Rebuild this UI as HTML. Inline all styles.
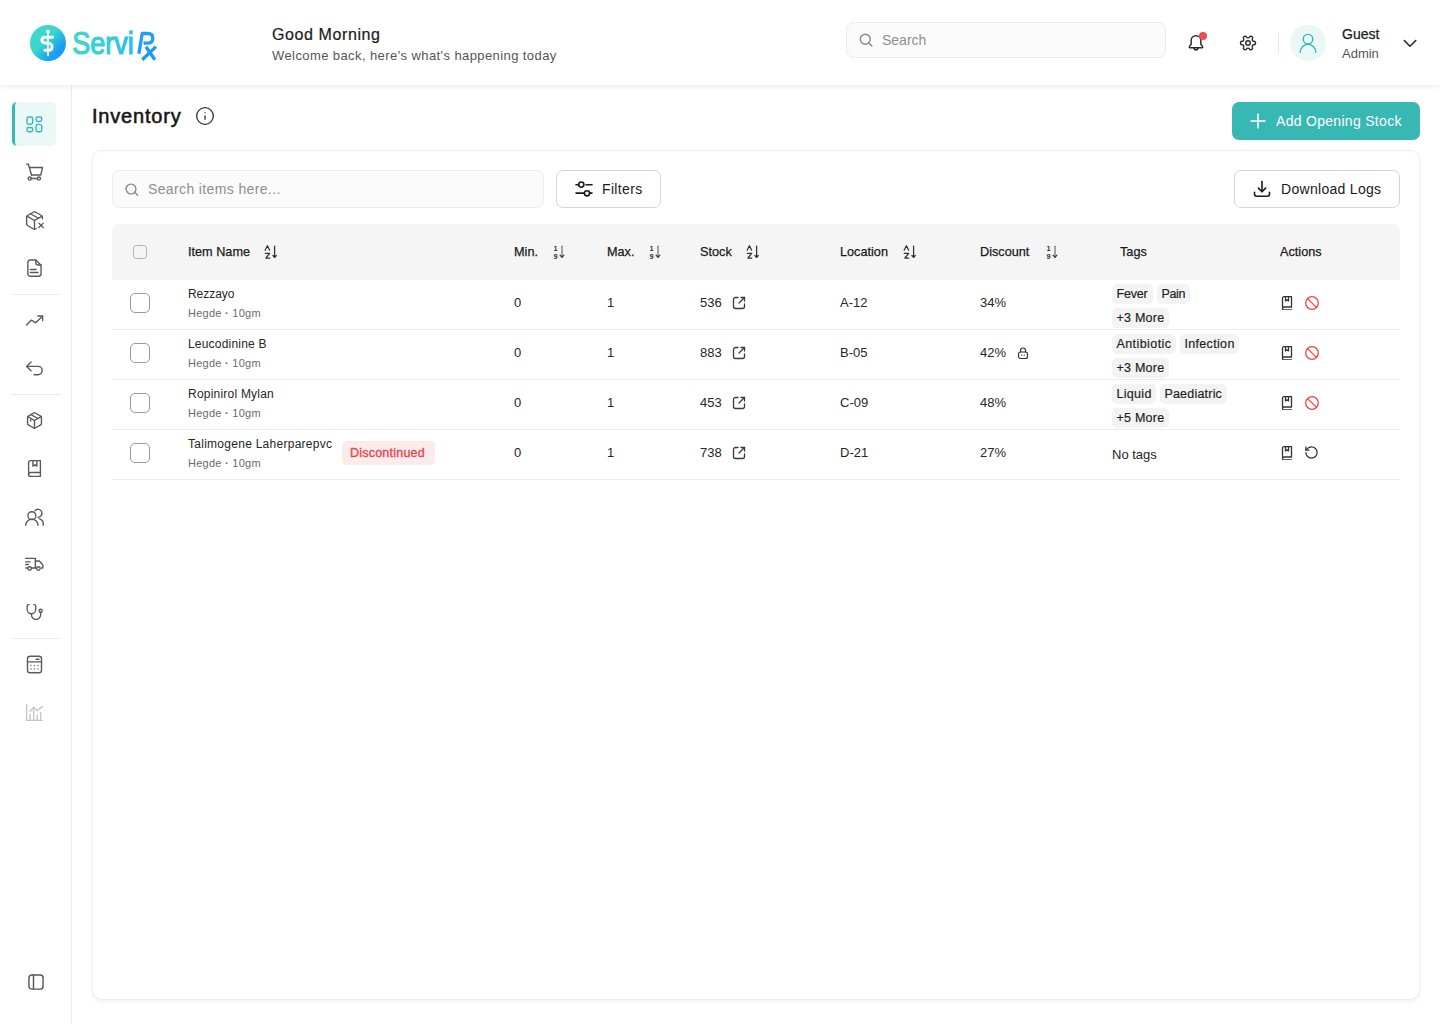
<!DOCTYPE html>
<html><head><meta charset="utf-8">
<style>
*{box-sizing:border-box;margin:0;padding:0}
html,body{width:1440px;height:1024px;overflow:hidden;background:#fff;font-family:"Liberation Sans",sans-serif;color:#1a1a1a}
.abs{position:absolute}
#header{position:absolute;left:0;top:0;width:1440px;height:85px;background:#fff;box-shadow:0 2px 6px rgba(0,0,0,0.075);z-index:5}
#sidebar{position:absolute;left:0;top:85px;width:72px;height:939px;background:#fff;border-right:1px solid #ececec}
.nav{position:absolute;left:12px;width:44px;height:44px;border-radius:7px;display:flex;align-items:center;justify-content:center}
.nav svg{width:21px;height:21px;fill:none;stroke:#5a5a5a;stroke-width:1.6;stroke-linecap:round;stroke-linejoin:round}
.nav.active{background:#ebf8f8;border-left:3px solid #38b8b2;border-radius:5px}
.nav.active svg{margin-left:-3px}
.nav.active svg{stroke:#38b8b2}
.sdiv{position:absolute;left:12px;width:48px;height:1px;background:#ececec}
.txt{position:absolute;white-space:nowrap;line-height:1}
#card{position:absolute;left:92px;top:150px;width:1328px;height:850px;background:#fff;border:1px solid #ededed;border-radius:10px;box-shadow:0 2px 4px rgba(0,0,0,0.05)}
.th{position:absolute;top:224px;left:112px;width:1288px;height:56px;background:#f5f5f5;border-radius:7px 7px 0 0}
.row{position:absolute;left:112px;width:1288px;height:50px;border-bottom:1px solid #ebebeb}
.hl{font-size:12.7px;color:#1a1a1a;-webkit-text-stroke:0.25px #1a1a1a}
.cell{font-size:13px;color:#262626}
.sub{font-size:11px;letter-spacing:0.26px;color:#6b6b6b}
.cb{position:absolute;width:20px;height:20px;border:1.7px solid #999;border-radius:5px;background:#fff}
.tags{position:absolute;width:140px;display:flex;flex-wrap:wrap;gap:4px}
.tag{position:absolute;height:20px;padding:0 0 0 4.4px;background:#f3f3f3;border-radius:5px;font-size:12.5px;line-height:20px;color:#1f1f1f;-webkit-text-stroke:0.2px #1f1f1f;white-space:nowrap}
.tb{font-size:14px}
.nm{font-size:12px;color:#262626}
.badge{font-size:12.5px;letter-spacing:0.22px;color:#e5484d;-webkit-text-stroke:0.35px #e5484d}
svg.ic{position:absolute;fill:none;stroke-linecap:round;stroke-linejoin:round}
</style></head><body>

<div id="header">
  <!-- logo -->
  <svg class="abs" style="left:25px;top:20px" width="140" height="46" viewBox="0 0 140 46">
    <defs>
      <linearGradient id="lg1" x1="9" y1="9" x2="37" y2="37" gradientUnits="userSpaceOnUse"><stop offset="0" stop-color="#3fd8cc"/><stop offset="0.42" stop-color="#3cd4ce"/><stop offset="0.62" stop-color="#27b8e3"/><stop offset="0.8" stop-color="#1b9ff0"/><stop offset="1" stop-color="#1a9cf2"/></linearGradient>
      <linearGradient id="lg2" x1="48" y1="0" x2="110" y2="0" gradientUnits="userSpaceOnUse"><stop offset="0" stop-color="#3fd8cb"/><stop offset="0.5" stop-color="#36cdd6"/><stop offset="1" stop-color="#2bbde6"/></linearGradient>
    </defs>
    <circle cx="23" cy="23" r="18" fill="url(#lg1)"/>
    <path d="M23 12v23.4" stroke="#fff" stroke-width="1.6" stroke-linecap="round"/>
    <circle cx="23" cy="11.6" r="1.9" fill="#fff"/>
    <path d="M27.6 17.3H20.2C18 17.3 16.9 18.5 16.9 20.1 16.9 21.7 18 22.8 20.2 23L23.8 23.4C26 23.6 27.1 24.9 27.1 26.7 27.1 28.6 26 30.2 23.8 30.2H19.8" fill="none" stroke="#fff" stroke-width="2.9" stroke-linecap="round" stroke-linejoin="round"/>
    <text x="47.3" y="33.8" font-family="Liberation Sans" font-size="30.5" fill="url(#lg2)" stroke="url(#lg2)" stroke-width="1.2" textLength="61.5" lengthAdjust="spacingAndGlyphs">Servi</text>
    <path d="M113.9 33.8 117.2 13.5h5.6c3.2 0 5 2 5 4.8 0 3-2 4.9-5.3 4.9h-4" fill="none" stroke="#1f9ff0" stroke-width="3.3" stroke-linejoin="round"/>
    <path d="M130.9 26.6 117.3 39.7" fill="none" stroke="#1a9cf0" stroke-width="3.3"/>
    <path d="M121 26.8 129.9 39.7" fill="none" stroke="#1a9cf0" stroke-width="3.3"/>
  </svg>

  <div class="txt" style="left:272px;top:27px;font-size:16px;letter-spacing:0.6px;color:#1a1a1a;-webkit-text-stroke:0.2px #1a1a1a">Good Morning</div>
  <div class="txt" style="left:272px;top:49px;font-size:13px;letter-spacing:0.41px;color:#555">Welcome back, here's what's happening today</div>

  <div class="abs" style="left:846px;top:22px;width:320px;height:36px;border:1px solid #ebebeb;border-radius:8px;background:#fbfbfb"></div>
  <svg class="ic" style="left:859px;top:33px" width="14" height="14" viewBox="0 0 14 14" stroke="#888" stroke-width="1.4"><circle cx="6.3" cy="6.3" r="5"/><path d="M12.9 12.9l-3-3"/></svg>
  <div class="txt" style="left:882px;top:33px;font-size:14px;color:#8f8f8f">Search</div>

  <svg class="ic" style="left:1186px;top:33px" width="20" height="20" viewBox="0 0 24 24" stroke="#2a2a2a" stroke-width="1.75"><path d="M6.2 9a5.8 5.8 0 0 1 11.6 0v4.5l2 2.6c.5.7 0 1.6-.8 1.6H5c-.8 0-1.3-.9-.8-1.6l2-2.6z"/><path d="M9.5 17.8a2.5 2.5 0 0 0 5 0"/></svg>
  <div class="abs" style="left:1199px;top:32px;width:8px;height:8px;border-radius:50%;background:#ef4a4f"></div>
  <svg class="ic" style="left:1238px;top:33px" width="20" height="20" viewBox="0 0 24 24" stroke="#2a2a2a" stroke-width="1.9"><g transform="rotate(90 12 12) translate(12 12) scale(0.9) translate(-12 -12)"><path d="M12.22 2h-.44a2 2 0 0 0-2 2v.18a2 2 0 0 1-1 1.73l-.43.25a2 2 0 0 1-2 0l-.15-.08a2 2 0 0 0-2.73.73l-.22.38a2 2 0 0 0 .73 2.73l.15.1a2 2 0 0 1 1 1.72v.51a2 2 0 0 1-1 1.74l-.15.09a2 2 0 0 0-.73 2.73l.22.38a2 2 0 0 0 2.73.73l.15-.08a2 2 0 0 1 2 0l.43.25a2 2 0 0 1 1 1.73V20a2 2 0 0 0 2 2h.44a2 2 0 0 0 2-2v-.18a2 2 0 0 1 1-1.73l.43-.25a2 2 0 0 1 2 0l.15.08a2 2 0 0 0 2.73-.73l.22-.39a2 2 0 0 0-.73-2.73l-.15-.08a2 2 0 0 1-1-1.74v-.5a2 2 0 0 1 1-1.74l.15-.09a2 2 0 0 0 .73-2.73l-.22-.38a2 2 0 0 0-2.73-.73l-.15.08a2 2 0 0 1-2 0l-.43-.25a2 2 0 0 1-1-1.73V4a2 2 0 0 0-2-2z"/><circle cx="12" cy="12" r="3"/></g></svg>
  <div class="abs" style="left:1278px;top:33px;width:1px;height:20px;background:#e6e6e6"></div>
  <div class="abs" style="left:1290px;top:25px;width:36px;height:36px;border-radius:50%;background:#e9f8f7"></div>
  <svg class="ic" style="left:1297px;top:32px" width="22" height="22" viewBox="0 0 24 24" stroke="#38b8b2" stroke-width="1.6"><circle cx="12" cy="7.8" r="5.2"/><path d="M20.5 22a8.5 8.5 0 0 0-17 0"/></svg>
  <div class="txt" style="left:1342px;top:27px;font-size:14px;color:#1a1a1a;-webkit-text-stroke:0.25px #1a1a1a">Guest</div>
  <div class="txt" style="left:1342px;top:47px;font-size:13px;color:#555">Admin</div>
  <svg class="ic" style="left:1403px;top:39px" width="14" height="9" viewBox="0 0 14 9" stroke="#2a2a2a" stroke-width="1.6"><path d="M1.3 1.5l5.7 5.7 5.7-5.7"/></svg>
</div>

<div id="sidebar"></div>
<div class="nav active" style="top:102px"><svg viewBox="0 0 24 24"><rect x="3.4" y="3.4" width="6.5" height="8.3" rx="2"/><rect x="3.4" y="15.5" width="6.5" height="4.8" rx="2"/><rect x="13.8" y="3.4" width="6.5" height="5.1" rx="2"/><rect x="13.8" y="11.8" width="6.5" height="8.5" rx="2"/></svg></div>
<div class="nav" style="top:150px"><svg viewBox="0 0 24 24"><path d="M3.2 2.5H5l3.6 12.4"/><path d="M6.9 6.3h14.2l-1.9 8.6H8.6"/><circle cx="6.6" cy="18.9" r="1.8"/><circle cx="17" cy="18.9" r="1.8"/><path d="M8.4 18.9h6.8"/></svg></div>
<div class="nav" style="top:198px"><svg viewBox="0 0 24 24"><path d="M21 10V8a2 2 0 0 0-1-1.73l-7-4a2 2 0 0 0-2 0l-7 4A2 2 0 0 0 3 8v8a2 2 0 0 0 1 1.73l7 4a2 2 0 0 0 2 0l1-.57"/><path d="M3.3 7 12 12l8.7-5"/><path d="M12 22V12"/><path d="M7.5 4.27l9 5.15"/><path d="m17 15 5 5"/><path d="m22 15-5 5"/></svg></div>
<div class="nav" style="top:246px"><svg viewBox="0 0 24 24"><path d="M13.5 2.2H7.2a2.8 2.8 0 0 0-2.8 2.8v13a2.8 2.8 0 0 0 2.8 2.8h9.5a2.8 2.8 0 0 0 2.8-2.8V8.2z"/><path d="M13.5 2.2v3.3a2.5 2.5 0 0 0 2.5 2.5h3.5"/><path d="M7.2 13.2h6.5"/><path d="M7.2 16.6h8.8"/></svg></div>
<div class="nav" style="top:298px"><svg viewBox="0 0 24 24"><path d="M2.9 17.2 8.3 11.6l5 2.9 7.8-7.4"/><path d="M15.8 6.9h5.5v5.3"/></svg></div>
<div class="nav" style="top:346px"><svg viewBox="0 0 24 24"><path d="M8 4.6 3 9.6l5 5"/><path d="M3 9.6h13a4.75 4.75 0 0 1 0 9.5h-4.5"/></svg></div>
<div class="nav" style="top:398px"><svg viewBox="0 0 24 24"><g transform="translate(12 12) scale(0.88) translate(-12 -12)" stroke-width="1.8"><path d="M21 8a2 2 0 0 0-1-1.73l-7-4a2 2 0 0 0-2 0l-7 4A2 2 0 0 0 3 8v8a2 2 0 0 0 1 1.73l7 4a2 2 0 0 0 2 0l7-4A2 2 0 0 0 21 16z"/><path d="M3.3 7 12 12l8.7-5"/><path d="M12 22V12"/><path d="M7.5 4.27l9 5.15"/><path d="M7 11v1.5"/></g></svg></div>
<div class="nav" style="top:446px"><svg viewBox="0 0 24 24"><g transform="translate(12 12) scale(0.9) translate(-12 -12)" stroke-width="1.75"><path d="M4.5 19.5v-15A2.5 2.5 0 0 1 7 2h12.5v20H7a2.5 2.5 0 0 1-2.5-2.5z"/><path d="M4.5 19.5A2.5 2.5 0 0 1 7 17h12.5"/><path d="M10 2v7l2.5-1.8L15 9V2"/></g></svg></div>
<div class="nav" style="top:494px"><svg viewBox="0 0 24 24"><circle cx="9" cy="11" r="4.5"/><path d="M2 22a7 7 0 0 1 14 0"/><path d="M12.5 5.5a4.5 4.5 0 1 1 3.5 7.3"/><path d="M17.5 14.5A7 7 0 0 1 22 22"/></svg></div>
<div class="nav" style="top:542px"><svg viewBox="0 0 24 24"><path d="M2 5h11v11"/><path d="M13 8h4.5l4 4.5V16h-1.5"/><path d="M2 16h2"/><path d="M9 16h5"/><circle cx="6.5" cy="16.5" r="2"/><circle cx="16.5" cy="16.5" r="2"/><path d="M2 9h5"/><path d="M2 12h3"/></svg></div>
<div class="nav" style="top:590px"><svg viewBox="0 0 24 24"><g transform="translate(12 12) scale(0.88 0.95) translate(-12 -12)" stroke-width="1.75"><path d="M5 2.5H4a1.5 1.5 0 0 0-1.5 1.5v4a5.5 5.5 0 0 0 11 0V4A1.5 1.5 0 0 0 12 2.5h-1"/><path d="M8 13.5v1a6 6 0 0 0 12 0v-3"/><circle cx="20" cy="10" r="2"/></g></svg></div>
<div class="nav" style="top:642px"><svg viewBox="0 0 24 24"><rect x="4" y="2.5" width="16" height="19" rx="3"/><path d="M4 9h16"/><path d="M14 6h3"/><path d="M8 13h.01"/><path d="M12 13h.01"/><path d="M16 13h.01"/><path d="M8 17h.01"/><path d="M12 17h.01"/><path d="M16 17h.01"/></svg></div>
<div class="nav" style="top:690px"><svg viewBox="0 0 24 24" style="stroke:#c6c6c6"><path d="M3 3v18h18"/><path d="M7 21v-7"/><path d="M11 21V9"/><path d="M15 21v-6"/><path d="M19 21v-9"/><path d="M7 11l4-5 4 4 6-5"/></svg></div>
<div class="sdiv" style="top:294px"></div>
<div class="sdiv" style="top:394px"></div>
<div class="sdiv" style="top:638px"></div>
<svg class="ic" style="left:26px;top:972px" width="20" height="20" viewBox="0 0 24 24" stroke="#555" stroke-width="1.7"><rect x="3.5" y="3.5" width="17" height="17" rx="3.5"/><path d="M9 3.5v17"/></svg>


<div class="txt" style="left:92px;top:106px;font-size:20px;letter-spacing:0.8px;color:#151515;-webkit-text-stroke:0.55px #151515">Inventory</div>
<svg class="ic" style="left:195px;top:106px" width="20" height="20" viewBox="0 0 24 24" stroke="#333" stroke-width="1.6"><circle cx="12" cy="12" r="10"/><path d="M12 16v-4"/><path d="M12 8h.01"/></svg>

<div class="abs" style="left:1232px;top:102px;width:188px;height:38px;border-radius:7px;background:#38b8b2"></div>
<svg class="ic" style="left:1250px;top:113px" width="16" height="16" viewBox="0 0 16 16" stroke="#fff" stroke-width="1.5"><path d="M8 1v14"/><path d="M1 8h14"/></svg>
<div class="txt" style="left:1276px;top:114px;font-size:14px;letter-spacing:0.3px;color:#fff">Add Opening Stock</div>

<div id="card"></div>
<div class="abs" style="left:112px;top:170px;width:432px;height:38px;border:1px solid #ececec;border-radius:7px;background:#fbfbfb"></div>
<svg class="ic" style="left:125px;top:183px" width="14" height="14" viewBox="0 0 14 14" stroke="#888" stroke-width="1.4"><circle cx="6" cy="6" r="4.9"/><path d="M12.6 12.3l-3-3"/></svg>
<div class="txt tb" style="left:148px;top:182px;color:#8f8f8f;letter-spacing:0.37px">Search items here...</div>
<div class="abs" style="left:556px;top:170px;width:105px;height:38px;border:1px solid #d6d6d6;border-radius:7px;background:#fff"></div>
<svg class="ic" style="left:575px;top:180px" width="18" height="18" viewBox="0 0 18 18" stroke="#1a1a1a" stroke-width="1.6"><path d="M1 4.7h2.6"/><path d="M11 4.7h6"/><circle cx="6.3" cy="4.6" r="2.6"/><path d="M1 13.1h8.2"/><path d="M14.7 13.1H17"/><circle cx="12" cy="13.3" r="2.6"/></svg>
<div class="txt tb" style="left:602px;top:182px;color:#1a1a1a;letter-spacing:0.35px">Filters</div>
<div class="abs" style="left:1234px;top:170px;width:166px;height:38px;border:1px solid #d6d6d6;border-radius:7px;background:#fff"></div>
<svg class="ic" style="left:1252px;top:180px" width="20" height="18" viewBox="0 0 20 18" stroke="#1a1a1a" stroke-width="1.6"><path d="M10 1.6v10"/><path d="M6.4 8.1l3.6 3.6 3.6-3.6"/><path d="M2.5 12.2v1.8a2.2 2.2 0 0 0 2.2 2.2h10.6a2.2 2.2 0 0 0 2.2-2.2v-1.8"/></svg>
<div class="txt tb" style="left:1281px;top:182px;color:#1a1a1a;letter-spacing:0.3px">Download Logs</div>
<div class="th"></div>
<div class="abs" style="left:133px;top:245px;width:14px;height:14px;border:1.4px solid #b0b0b0;border-radius:3.5px;background:transparent"></div>
<div class="txt hl" style="left:188px;top:246px;">Item Name</div>
<svg class="ic" style="left:258.0px;top:240px" width="26" height="22" viewBox="0 0 26 22" stroke="#333" stroke-width="1.25"><path d="M7.1 10.2 9.4 5.7 11.7 10.2"/><path d="M7.3 13.4h4.4L7.9 18h3.9"/><path d="M16.6 6.2v11"/><path d="M14.9 15.5l1.7 1.8 1.7-1.8"/></svg>
<div class="txt hl" style="left:514px;top:246px;">Min.</div>
<svg class="ic" style="left:547.8px;top:240px" width="26" height="22" viewBox="0 0 26 22"><text x="5.5" y="10.9" font-family="Liberation Sans" font-weight="bold" font-size="7.4" fill="#333">1</text><text x="5.5" y="18.7" font-family="Liberation Sans" font-weight="bold" font-size="7.4" fill="#333">9</text><path d="M14 6.2v10.8" stroke="#777" stroke-width="1.3"/><path d="M12.2 15.3l1.8 1.9 1.8-1.9" stroke="#444" stroke-width="1.3"/></svg>
<div class="txt hl" style="left:607px;top:246px;">Max.</div>
<svg class="ic" style="left:643.5px;top:240px" width="26" height="22" viewBox="0 0 26 22"><text x="5.5" y="10.9" font-family="Liberation Sans" font-weight="bold" font-size="7.4" fill="#333">1</text><text x="5.5" y="18.7" font-family="Liberation Sans" font-weight="bold" font-size="7.4" fill="#333">9</text><path d="M14 6.2v10.8" stroke="#777" stroke-width="1.3"/><path d="M12.2 15.3l1.8 1.9 1.8-1.9" stroke="#444" stroke-width="1.3"/></svg>
<div class="txt hl" style="left:700px;top:246px;">Stock</div>
<svg class="ic" style="left:740.4px;top:240px" width="26" height="22" viewBox="0 0 26 22" stroke="#333" stroke-width="1.25"><path d="M7.1 10.2 9.4 5.7 11.7 10.2"/><path d="M7.3 13.4h4.4L7.9 18h3.9"/><path d="M16.6 6.2v11"/><path d="M14.9 15.5l1.7 1.8 1.7-1.8"/></svg>
<div class="txt hl" style="left:840px;top:246px;">Location</div>
<svg class="ic" style="left:896.9px;top:240px" width="26" height="22" viewBox="0 0 26 22" stroke="#333" stroke-width="1.25"><path d="M7.1 10.2 9.4 5.7 11.7 10.2"/><path d="M7.3 13.4h4.4L7.9 18h3.9"/><path d="M16.6 6.2v11"/><path d="M14.9 15.5l1.7 1.8 1.7-1.8"/></svg>
<div class="txt hl" style="left:980px;top:246px;">Discount</div>
<svg class="ic" style="left:1040.6px;top:240px" width="26" height="22" viewBox="0 0 26 22"><text x="5.5" y="10.9" font-family="Liberation Sans" font-weight="bold" font-size="7.4" fill="#333">1</text><text x="5.5" y="18.7" font-family="Liberation Sans" font-weight="bold" font-size="7.4" fill="#333">9</text><path d="M14 6.2v10.8" stroke="#777" stroke-width="1.3"/><path d="M12.2 15.3l1.8 1.9 1.8-1.9" stroke="#444" stroke-width="1.3"/></svg>
<div class="txt hl" style="left:1120px;top:246px;">Tags</div>
<div class="txt hl" style="left:1280px;top:246px;">Actions</div>
<div class="row" style="top:280px"></div>
<div class="cb" style="left:130px;top:293px"></div>
<div class="txt nm" style="left:188px;top:288px;letter-spacing:-0.05px">Rezzayo</div>
<div class="txt sub" style="left:188px;top:308px;">Hegde <b style="font-weight:700">·</b> 10gm</div>
<div class="txt cell" style="left:514px;top:296px;">0</div>
<div class="txt cell" style="left:607px;top:296px;">1</div>
<div class="txt cell" style="left:700px;top:296px;">536</div>
<svg class="ic" style="left:731px;top:295px" width="16" height="16" viewBox="0 0 16 16" stroke="#3a3a3a" stroke-width="1.3"><path d="M7 2.5H4.5a2 2 0 0 0-2 2v7a2 2 0 0 0 2 2h7a2 2 0 0 0 2-2V9"/><path d="M8 8l5.5-5.5"/><path d="M10 2.5h3.5V6"/></svg>
<div class="txt cell" style="left:840px;top:296px;">A-12</div>
<div class="txt cell" style="left:980px;top:296px;">34%</div>
<div class="tag" style="left:1112px;top:284px;width:41px;letter-spacing:-0.15px">Fever</div>
<div class="tag" style="left:1157px;top:284px;width:33px;letter-spacing:-0.3px">Pain</div>
<div class="tag" style="left:1112px;top:308px;width:57px;letter-spacing:0.26px">+3 More</div>
<svg class="ic" style="left:1280px;top:295px" width="15" height="15" viewBox="0 0 15 15" stroke="#333" stroke-width="1.3"><path d="M2.5 12V3.2c0-.9.6-1.5 1.5-1.5h7.5v10.3H4a1.5 1.5 0 0 0-1.5 1.5v0c0 .8.7 1.5 1.5 1.5h7.5"/><path d="M5.5 1.7v4.2l1.5-1.1 1.5 1.1V1.7"/></svg>
<svg class="ic" style="left:1304px;top:295px" width="16" height="16" viewBox="0 0 16 16" stroke="#ef4444" stroke-width="1.3"><circle cx="8" cy="8" r="6.3"/><path d="M3.6 3.6l8.8 8.8"/></svg>
<div class="row" style="top:330px"></div>
<div class="cb" style="left:130px;top:343px"></div>
<div class="txt nm" style="left:188px;top:338px;letter-spacing:0.2px">Leucodinine B</div>
<div class="txt sub" style="left:188px;top:358px;">Hegde <b style="font-weight:700">·</b> 10gm</div>
<div class="txt cell" style="left:514px;top:346px;">0</div>
<div class="txt cell" style="left:607px;top:346px;">1</div>
<div class="txt cell" style="left:700px;top:346px;">883</div>
<svg class="ic" style="left:731px;top:345px" width="16" height="16" viewBox="0 0 16 16" stroke="#3a3a3a" stroke-width="1.3"><path d="M7 2.5H4.5a2 2 0 0 0-2 2v7a2 2 0 0 0 2 2h7a2 2 0 0 0 2-2V9"/><path d="M8 8l5.5-5.5"/><path d="M10 2.5h3.5V6"/></svg>
<div class="txt cell" style="left:840px;top:346px;">B-05</div>
<div class="txt cell" style="left:980px;top:346px;">42%</div>
<svg class="ic" style="left:1016px;top:346px" width="14" height="14" viewBox="0 0 14 14" stroke="#333" stroke-width="1.2"><rect x="2.5" y="6" width="9" height="6.5" rx="2"/><path d="M4.5 6V4.5a2.5 2.5 0 0 1 5 0V6"/><path d="M5.8 9.2h.01M8.2 9.2h.01"/></svg>
<div class="tag" style="left:1112px;top:334px;width:64px;letter-spacing:0.44px">Antibiotic</div>
<div class="tag" style="left:1180px;top:334px;width:59px;letter-spacing:0.34px">Infection</div>
<div class="tag" style="left:1112px;top:358px;width:57px;letter-spacing:0.26px">+3 More</div>
<svg class="ic" style="left:1280px;top:345px" width="15" height="15" viewBox="0 0 15 15" stroke="#333" stroke-width="1.3"><path d="M2.5 12V3.2c0-.9.6-1.5 1.5-1.5h7.5v10.3H4a1.5 1.5 0 0 0-1.5 1.5v0c0 .8.7 1.5 1.5 1.5h7.5"/><path d="M5.5 1.7v4.2l1.5-1.1 1.5 1.1V1.7"/></svg>
<svg class="ic" style="left:1304px;top:345px" width="16" height="16" viewBox="0 0 16 16" stroke="#ef4444" stroke-width="1.3"><circle cx="8" cy="8" r="6.3"/><path d="M3.6 3.6l8.8 8.8"/></svg>
<div class="row" style="top:380px"></div>
<div class="cb" style="left:130px;top:393px"></div>
<div class="txt nm" style="left:188px;top:388px;letter-spacing:0.22px">Ropinirol Mylan</div>
<div class="txt sub" style="left:188px;top:408px;">Hegde <b style="font-weight:700">·</b> 10gm</div>
<div class="txt cell" style="left:514px;top:396px;">0</div>
<div class="txt cell" style="left:607px;top:396px;">1</div>
<div class="txt cell" style="left:700px;top:396px;">453</div>
<svg class="ic" style="left:731px;top:395px" width="16" height="16" viewBox="0 0 16 16" stroke="#3a3a3a" stroke-width="1.3"><path d="M7 2.5H4.5a2 2 0 0 0-2 2v7a2 2 0 0 0 2 2h7a2 2 0 0 0 2-2V9"/><path d="M8 8l5.5-5.5"/><path d="M10 2.5h3.5V6"/></svg>
<div class="txt cell" style="left:840px;top:396px;">C-09</div>
<div class="txt cell" style="left:980px;top:396px;">48%</div>
<div class="tag" style="left:1112px;top:384px;width:44px;letter-spacing:0.32px">Liquid</div>
<div class="tag" style="left:1160px;top:384px;width:66.6px;letter-spacing:0.21px">Paediatric</div>
<div class="tag" style="left:1112px;top:408px;width:57px;letter-spacing:0.26px">+5 More</div>
<svg class="ic" style="left:1280px;top:395px" width="15" height="15" viewBox="0 0 15 15" stroke="#333" stroke-width="1.3"><path d="M2.5 12V3.2c0-.9.6-1.5 1.5-1.5h7.5v10.3H4a1.5 1.5 0 0 0-1.5 1.5v0c0 .8.7 1.5 1.5 1.5h7.5"/><path d="M5.5 1.7v4.2l1.5-1.1 1.5 1.1V1.7"/></svg>
<svg class="ic" style="left:1304px;top:395px" width="16" height="16" viewBox="0 0 16 16" stroke="#ef4444" stroke-width="1.3"><circle cx="8" cy="8" r="6.3"/><path d="M3.6 3.6l8.8 8.8"/></svg>
<div class="row" style="top:430px"></div>
<div class="cb" style="left:130px;top:443px"></div>
<div class="txt nm" style="left:188px;top:438px;letter-spacing:0.27px">Talimogene Laherparepvc</div>
<div class="txt sub" style="left:188px;top:458px;">Hegde <b style="font-weight:700">·</b> 10gm</div>
<div class="abs" style="left:342px;top:441px;width:93px;height:24px;border-radius:5px;background:#fcebeb"></div>
<div class="txt badge" style="left:350px;top:447px;">Discontinued</div>
<div class="txt cell" style="left:514px;top:446px;">0</div>
<div class="txt cell" style="left:607px;top:446px;">1</div>
<div class="txt cell" style="left:700px;top:446px;">738</div>
<svg class="ic" style="left:731px;top:445px" width="16" height="16" viewBox="0 0 16 16" stroke="#3a3a3a" stroke-width="1.3"><path d="M7 2.5H4.5a2 2 0 0 0-2 2v7a2 2 0 0 0 2 2h7a2 2 0 0 0 2-2V9"/><path d="M8 8l5.5-5.5"/><path d="M10 2.5h3.5V6"/></svg>
<div class="txt cell" style="left:840px;top:446px;">D-21</div>
<div class="txt cell" style="left:980px;top:446px;">27%</div>
<div class="txt cell" style="left:1112px;top:448px;">No tags</div>
<svg class="ic" style="left:1280px;top:445px" width="15" height="15" viewBox="0 0 15 15" stroke="#333" stroke-width="1.3"><path d="M2.5 12V3.2c0-.9.6-1.5 1.5-1.5h7.5v10.3H4a1.5 1.5 0 0 0-1.5 1.5v0c0 .8.7 1.5 1.5 1.5h7.5"/><path d="M5.5 1.7v4.2l1.5-1.1 1.5 1.1V1.7"/></svg>
<svg class="ic" style="left:1304px;top:445px" width="15" height="15" viewBox="0 0 24 24" stroke="#333" stroke-width="2"><path d="M3 12a9 9 0 1 0 9-9 9.75 9.75 0 0 0-6.74 2.74L3 8"/><path d="M3 3v5h5"/></svg>


</body></html>
